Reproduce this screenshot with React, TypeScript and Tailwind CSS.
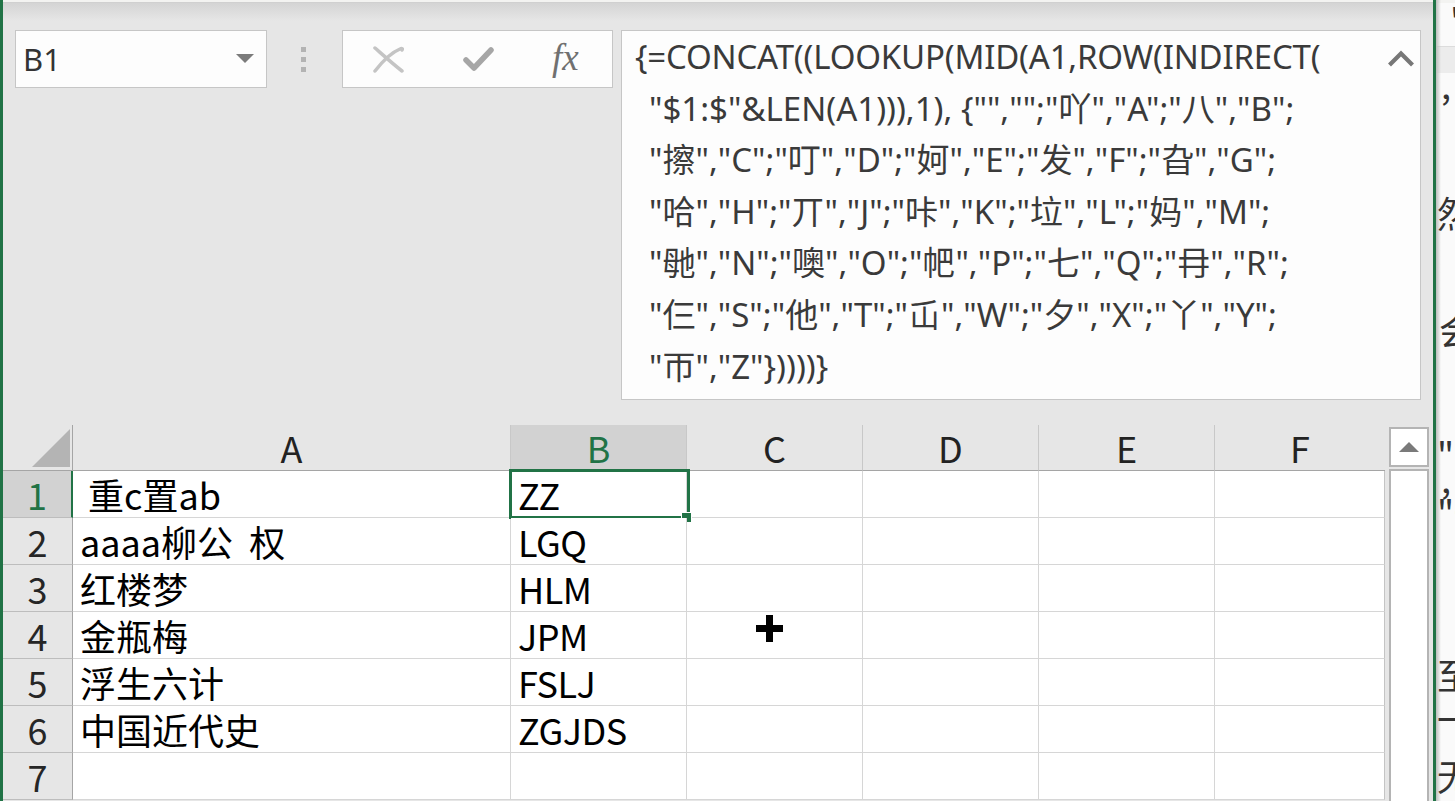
import React from "react";

const FORMULA = [
  "{=CONCAT((LOOKUP(MID(A1,ROW(INDIRECT(",
  "\"$1:$\"&LEN(A1))),1), {\"\",\"\";\"吖\",\"A\";\"八\",\"B\";",
  "\"擦\",\"C\";\"叮\",\"D\";\"妸\",\"E\";\"发\",\"F\";\"旮\",\"G\";",
  "\"哈\",\"H\";\"丌\",\"J\";\"咔\",\"K\";\"垃\",\"L\";\"妈\",\"M\";",
  "\"毑\",\"N\";\"噢\",\"O\";\"帊\",\"P\";\"七\",\"Q\";\"冄\",\"R\";",
  "\"仨\",\"S\";\"他\",\"T\";\"屲\",\"W\";\"夕\",\"X\";\"丫\",\"Y\";",
  "\"帀\",\"Z\"}))))}",
];

const ROWS = [
  { n: "1", a: " 重c置ab", b: "ZZ" },
  { n: "2", a: "aaaa柳公  权", b: "LGQ" },
  { n: "3", a: "红楼梦", b: "HLM" },
  { n: "4", a: "金瓶梅", b: "JPM" },
  { n: "5", a: "浮生六计", b: "FSLJ" },
  { n: "6", a: "中国近代史", b: "ZGJDS" },
  { n: "7", a: "", b: "" },
];

function NameBox() {
  return (
    <div className="w-[252px] h-[58px] shrink-0 bg-[#fdfdfd] border border-[#c6c6c6] flex items-center justify-between pl-[7px] pr-[12px]">
      <span className="text-[31px] leading-none text-[#333] [font-family:'Noto_Sans',sans-serif]">B1</span>
      <svg width="18" height="10" viewBox="0 0 18 10">
        <polygon points="0,0 18,0 9,9" fill="#7b7b7b" />
      </svg>
    </div>
  );
}

function FxBox() {
  return (
    <div className="w-[271px] h-[58px] shrink-0 bg-[#fdfdfd] border border-[#c6c6c6] flex items-center pl-[30px]">
      <svg width="31" height="27" viewBox="0 0 31 27" className="shrink-0">
        <path d="M2 2 C 10 9, 20 18, 29 25" stroke="#c4c4c4" strokeWidth="3.5" fill="none" strokeLinecap="round" />
        <path d="M2 25 C 9 16, 17 7, 27 3 C 29 2, 30 3, 29 4" stroke="#c4c4c4" strokeWidth="3.5" fill="none" strokeLinecap="round" />
      </svg>
      <svg width="31" height="26" viewBox="0 0 31 26" className="shrink-0 ml-[59px]">
        <path d="M3 14 L11 22 L28 4" stroke="#a6a6a6" strokeWidth="5.5" fill="none" strokeLinecap="round" strokeLinejoin="round" />
      </svg>
      <span className="ml-[58px] text-[37px] leading-none italic text-[#707070] [font-family:'Liberation_Serif',serif] -mt-[4px]">
        fx
      </span>
    </div>
  );
}

function FormulaBox() {
  return (
    <div className="ml-[8px] w-[800px] h-[370px] shrink-0 bg-[#fdfdfd] border border-[#c6c6c6] flex">
      <div className="flex-1 pl-[13px] text-[33px] text-[#3a3a3a] [font-family:'Noto_Sans','Noto_Sans_CJK_SC',sans-serif] whitespace-pre">
        {FORMULA.map((l, i) => (
          <div key={i} className={i === 0 ? "h-[51.6px] leading-[51.6px] tracking-[-0.2px]" : "h-[51.6px] leading-[51.6px] pl-[14px]"}>
            {l}
          </div>
        ))}
      </div>
      <div className="w-[40px] pt-[19px] pr-[5px] flex justify-end">
        <svg width="28" height="17" viewBox="0 0 28 17">
          <polyline points="2.5,15 14,3.5 25.5,15" stroke="#777" strokeWidth="4.2" fill="none" />
        </svg>
      </div>
    </div>
  );
}

function Grid() {
  return (
    <div className="w-[1382px] shrink-0 flex flex-col text-[36px] [font-family:'Noto_Sans_CJK_SC',sans-serif]">
      <div className="flex h-[46px] shrink-0">
        <div className="w-[70px] h-full border-r border-b border-[#a5a5a5] bg-[#e6e6e6] flex items-end">
          <svg width="69" height="45" viewBox="0 0 69 45">
            <polygon points="29,42 67,42 67,4" fill="#b4b4b4" />
          </svg>
        </div>
        <div className="w-[438px] h-full border-r border-r-[#c8c8c8] border-b border-b-[#a5a5a5] text-center leading-[45px] text-[#222]">A</div>
        <div className="w-[176px] h-full border-r border-r-[#c8c8c8] border-b border-b-[#a5a5a5] bg-[#d2d2d2] text-center leading-[45px] text-[#217346]">B</div>
        <div className="w-[176px] h-full border-r border-r-[#c8c8c8] border-b border-b-[#a5a5a5] text-center leading-[45px] text-[#222]">C</div>
        <div className="w-[176px] h-full border-r border-r-[#c8c8c8] border-b border-b-[#a5a5a5] text-center leading-[45px] text-[#222]">D</div>
        <div className="w-[176px] h-full border-r border-r-[#c8c8c8] border-b border-b-[#a5a5a5] text-center leading-[45px] text-[#222]">E</div>
        <div className="w-[170px] h-full border-b border-b-[#a5a5a5] text-center leading-[45px] text-[#222]">F</div>
      </div>
      {ROWS.map((r, i) => (
        <div key={r.n} className="flex h-[47px] shrink-0">
          <div
            className={
              i === 0
                ? "w-[70px] h-full border-r-2 border-r-[#217346] border-b border-b-[#bdbdbd] bg-[#d2d2d2] text-center leading-[46px] text-[#217346]"
                : "w-[70px] h-full border-r border-r-[#a5a5a5] border-b border-b-[#bdbdbd] bg-[#e6e6e6] text-center leading-[46px] text-[#262626]"
            }
          >
            {r.n}
          </div>
          <div className="w-[438px] h-full border-r border-b border-[#d6d6d6] bg-white px-[7px] leading-[46px] text-black whitespace-pre">
            {r.a}
          </div>
          <div className="relative w-[176px] h-full border-r border-b border-[#d6d6d6] bg-white px-[7px] leading-[46px] text-black whitespace-pre tracking-[-0.5px]">
            {r.b}
            {i === 0 && (
              <>
                <div className="absolute -left-[2px] -top-[2px] w-[181px] h-[50px] border-[3px] border-[#217346]" />
                <div className="absolute left-[171px] top-[42px] w-[9px] h-[9px] bg-[#217346] ring-1 ring-white" />
              </>
            )}
          </div>
          <div className="w-[176px] h-full border-r border-b border-[#d6d6d6] bg-white" />
          <div className="w-[176px] h-full border-r border-b border-[#d6d6d6] bg-white" />
          <div className="w-[176px] h-full border-r border-b border-[#d6d6d6] bg-white" />
          <div className="w-[170px] h-full border-r border-r-[#c4c4c4] border-b border-b-[#d6d6d6] bg-white" />
        </div>
      ))}
    </div>
  );
}

function Scrollbar() {
  return (
    <div className="ml-[4px] w-[40px] shrink-0 flex flex-col pt-[2px]">
      <div className="h-[40px] shrink-0 border-2 border-[#b4b4b4] bg-white flex items-center justify-center">
        <svg width="20" height="10" viewBox="0 0 20 10">
          <polygon points="0,10 20,10 10,0" fill="#7a7a7a" />
        </svg>
      </div>
      <div className="mt-[2px] flex-1 border-2 border-b-0 border-[#b4b4b4] bg-white" />
    </div>
  );
}

function SideStrip() {
  const frag = "absolute text-[36px] leading-[30px] text-[#333] [font-family:'Noto_Sans_CJK_SC',sans-serif] whitespace-pre";
  return (
    <div className="relative flex-1 h-full overflow-hidden bg-[#fafafa]">
      <div className="absolute left-0 top-0 w-full h-[3px] bg-[#f3f3f1]" />
      <div className="absolute left-0 top-[46px] w-full h-[27px] bg-[#ececec] border-t border-[#dcdcdc]" />
      <div className="absolute left-0 top-0 w-[5px] h-full bg-linear-to-r from-[#bdbdbd] to-transparent" />
      <span className={frag + " left-[14px] top-[4px] text-[22px] leading-[20px]"}>"</span>
      <span className={frag + " left-[5px] top-[68px]"}>,</span>
      <span className={frag + " left-[1px] top-[197px]"}>然</span>
      <span className={frag + " left-[3px] top-[314px]"}>会</span>
      <span className={frag + " left-[1px] top-[438px] text-[26px] leading-[22px]"}>" "</span>
      <span className={frag + " left-[5px] top-[462px] text-[30px] leading-[22px]"}>,</span>
      <span className={frag + " left-[1px] top-[496px] text-[28px] leading-[24px]"}>"一</span>
      <span className={frag + " left-[1px] top-[659px]"}>至</span>
      <span className={frag + " left-[1px] top-[703px]"}>一</span>
      <span className={frag + " left-[1px] top-[760px]"}>无</span>
    </div>
  );
}

export default function App() {
  return (
    <div className="relative w-[1455px] h-[801px] overflow-hidden flex bg-[#e6e6e6]">
      <div className="w-[3px] h-full shrink-0 bg-[#217346]" />
      <div className="w-[1430px] h-full shrink-0 flex flex-col">
        <div className="h-[3px] shrink-0 bg-[#f3f3f1] border-b border-[#d0d0d0]" />
        <div className="h-[18px] shrink-0 bg-linear-to-b from-[#d4d4d4] to-[#e6e6e6]" />
        <div className="flex items-start pl-[12px] pt-[9px] shrink-0">
          <NameBox />
          <div className="w-[75px] h-[58px] shrink-0 flex flex-col justify-center gap-[5px] pl-[34px]">
            <div className="w-[5px] h-[5px] bg-[#b3b3b3]" />
            <div className="w-[5px] h-[5px] bg-[#b3b3b3]" />
            <div className="w-[5px] h-[5px] bg-[#b3b3b3]" />
          </div>
          <FxBox />
          <FormulaBox />
        </div>
        <div className="mt-[25px] flex flex-1 min-h-0">
          <Grid />
          <Scrollbar />
        </div>
      </div>
      <div className="w-[3px] h-full shrink-0 bg-[#217346]" />
      <SideStrip />
      <svg className="absolute left-[756px] top-[615px]" width="27" height="27" viewBox="0 0 27 27">
        <rect x="0" y="10" width="27" height="7" fill="#000" />
        <rect x="10" y="0" width="7" height="27" fill="#000" />
      </svg>
    </div>
  );
}
